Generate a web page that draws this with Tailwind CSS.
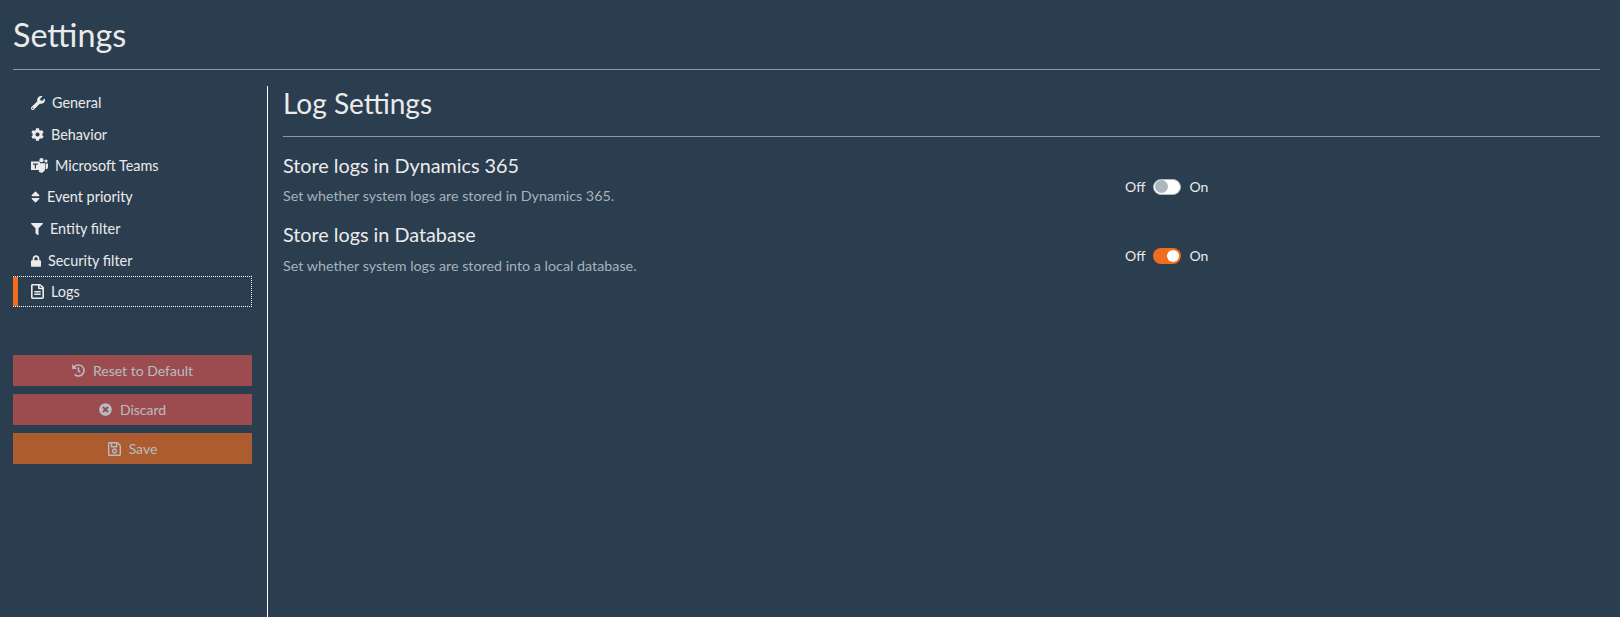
<!DOCTYPE html>
<html lang="en">
<head>
    <meta charset="UTF-8">
    <title>Settings</title>
    <script src="https://cdn.jsdelivr.net/npm/@tailwindcss/browser@4"></script>
</head>
<body class="bg-[#2b3e50] text-[#ebebeb] font-['Lato',sans-serif] h-[617px] overflow-hidden">
    <div class="pl-[13px] pr-[20px]">
        <h1 class="text-[32.3px] leading-[38px] pt-4 pb-[15px] border-b border-[#8f9aa5]">Settings</h1>
        <div class="flex mt-4 h-[531px]">
            <aside class="w-[255px] border-r border-white shrink-0 pr-[15px]">
                <nav class="text-[14.4px] flex flex-col h-[222px]">
                    <a class="h-[31.6px] pt-[2px] pl-[18px] flex items-center gap-[7px]">
                        <svg class="w-[14px] h-[14px] fill-current" viewBox="0 0 512 512"><path d="M507.73 109.1c-2.24-9.03-13.54-12.09-20.12-5.51l-74.36 74.36-67.88-11.31-11.31-67.88 74.36-74.36c6.62-6.62 3.43-17.9-5.66-20.16-47.38-11.74-99.55.91-136.58 37.93-39.64 39.64-50.55 97.1-34.05 147.2L18.74 402.76c-24.99 24.99-24.99 65.51 0 90.5 24.99 24.99 65.51 24.99 90.5 0l213.21-213.21c50.12 16.71 107.47 5.68 147.37-34.22 37.07-37.07 49.7-89.32 37.91-136.73zM64 472c-13.25 0-24-10.75-24-24 0-13.26 10.75-24 24-24s24 10.74 24 24c0 13.25-10.75 24-24 24z"/></svg>
                        General</a>
                    <a class="h-[31.6px] pt-[2px] pl-[18px] flex items-center gap-[7px]">
                        <svg class="w-[13px] h-[13px] fill-current" viewBox="0 0 512 512"><path d="M487.4 315.7l-42.6-24.6c4.3-23.2 4.3-47 0-70.2l42.6-24.6c4.9-2.8 7.1-8.6 5.5-14-11.1-35.6-30-67.8-54.7-94.6-3.8-4.1-10-5.1-14.8-2.3L380.8 110c-17.9-15.4-38.5-27.3-60.8-35.1V25.8c0-5.6-3.9-10.5-9.4-11.7-36.7-8.2-74.3-7.8-109.2 0-5.5 1.2-9.4 6.1-9.4 11.7V75c-22.2 7.9-42.8 19.8-60.8 35.1L88.7 85.5c-4.9-2.8-11-1.9-14.8 2.3-24.7 26.7-43.6 58.9-54.7 94.6-1.7 5.4.6 11.2 5.5 14L67.3 221c-4.3 23.2-4.3 47 0 70.2l-42.6 24.6c-4.9 2.8-7.1 8.6-5.5 14 11.1 35.6 30 67.8 54.7 94.6 3.8 4.1 10 5.1 14.8 2.3l42.6-24.6c17.9 15.4 38.5 27.3 60.8 35.1v49.2c0 5.6 3.9 10.5 9.4 11.7 36.7 8.2 74.3 7.8 109.2 0 5.5-1.2 9.4-6.1 9.4-11.7v-49.2c22.2-7.9 42.8-19.8 60.8-35.1l42.6 24.6c4.9 2.8 11 1.9 14.8-2.3 24.7-26.7 43.6-58.9 54.7-94.6 1.5-5.5-.7-11.3-5.6-14.1zM256 336c-44.1 0-80-35.9-80-80s35.9-80 80-80 80 35.9 80 80-35.9 80-80 80z"/></svg>
                        Behavior</a>
                    <a class="h-[31.6px] pt-[2px] pl-[18px] flex items-center gap-[7px]">
                        <svg class="w-[17px] h-[15px] fill-current" viewBox="0 0 17 15"><circle cx="10.5" cy="2.2" r="2.1"/><circle cx="15" cy="3" r="1.6"/><path d="M8 5.2h6v5.8a3.6 3.6 0 0 1-6.6 2H8zM14.6 5.4H17v3.6a2.2 2.2 0 0 1-2.4 2.2z"/><path fill-rule="evenodd" d="M0 3.6h8.8v8.4H0zM2 5.4v1.3h1.8v3.8h1.2V6.7h1.8V5.4z"/></svg>
                        Microsoft Teams</a>
                    <a class="h-[31.6px] pl-[18px] flex items-center gap-[7px]">
                        <svg class="w-[9px] h-[14px] fill-current" viewBox="0 0 320 512"><path d="M41 288h238c21.4 0 32.1 25.9 17 41L177 448c-9.4 9.4-24.6 9.4-33.9 0L24 329c-15.1-15.1-4.4-41 17-41zm255-105L177 64c-9.4-9.4-24.6-9.4-33.9 0L24 183c-15.1 15.1-4.4 41 17 41h238c21.4 0 32.1-25.9 17-41z"/></svg>
                        Event priority</a>
                    <a class="h-[31.6px] pt-[2px] pl-[18px] flex items-center gap-[7px]">
                        <svg class="w-[12px] h-[12px] fill-current" viewBox="0 0 512 512"><path d="M487.976 0H24.028C2.71 0-8.047 25.866 7.058 40.971L192 225.941V432c0 7.831 3.821 15.17 10.237 19.662l80 55.98C298.02 518.69 320 507.493 320 487.98V225.941l184.947-184.97C520.021 25.896 509.338 0 487.976 0z"/></svg>
                        Entity filter</a>
                    <a class="h-[31.6px] pt-[2px] pl-[18px] flex items-center gap-[7px]">
                        <svg class="w-[10px] h-[12px] fill-current" viewBox="0 0 448 512"><path d="M400 224h-24v-72C376 68.2 307.8 0 224 0S72 68.2 72 152v72H48c-26.5 0-48 21.5-48 48v192c0 26.5 21.5 48 48 48h352c26.5 0 48-21.5 48-48V272c0-26.5-21.5-48-48-48zm-104 0H152v-72c0-39.7 32.3-72 72-72s72 32.3 72 72v72z"/></svg>
                        Security filter</a>
                    <a class="h-[31.6px] pl-[18px] flex items-center gap-[7px] border border-l-0 border-dotted border-white shadow-[inset_5px_0_0_#f26c1e]">
                        <svg class="w-[13px] h-[15px] fill-current" preserveAspectRatio="none" viewBox="0 0 384 512"><path d="M288 248v28c0 6.6-5.4 12-12 12H108c-6.6 0-12-5.4-12-12v-28c0-6.6 5.4-12 12-12h168c6.6 0 12 5.4 12 12zm-12 72H108c-6.6 0-12 5.4-12 12v28c0 6.6 5.4 12 12 12h168c6.6 0 12-5.4 12-12v-28c0-6.6-5.4-12-12-12zm108-188.1V464c0 26.5-21.5 48-48 48H48c-26.5 0-48-21.5-48-48V48C0 21.5 21.5 0 48 0h204.1C264.8 0 277 5.1 286 14.1L369.9 98c9 8.9 14.1 21.2 14.1 33.9zm-128-80V128h76.1L256 51.9zM336 464V176H232c-13.3 0-24-10.7-24-24V48H48v416h288z"/></svg>
                        Logs</a>
                </nav>
                <div class="mt-[47px] flex flex-col gap-2 text-[14px] text-white">
                    <button class="h-[31px] bg-[#d9534f] opacity-65 flex items-center justify-center gap-2">
                        <svg class="w-[13px] h-[13px] fill-current" viewBox="0 0 512 512"><path d="M504 255.531c.253 136.64-111.18 248.372-247.82 248.468-59.015.042-113.223-20.53-155.822-54.911-11.077-8.94-11.905-25.541-1.839-35.607l11.267-11.267c8.609-8.609 22.353-9.551 31.891-1.984C173.062 425.135 212.781 440 256 440c101.705 0 184-82.311 184-184 0-101.705-82.311-184-184-184-48.814 0-93.149 18.969-126.068 49.932l50.754 50.754c10.08 10.08 2.941 27.314-11.313 27.314H24c-8.837 0-16-7.163-16-16V38.627c0-14.254 17.234-21.393 27.314-11.314l49.372 49.372C129.209 34.136 189.552 8 256 8c136.81 0 247.747 110.78 248 247.531zm-180.912 78.784l9.823-12.63c8.138-10.463 6.253-25.542-4.21-33.679L288 256.349V152c0-13.255-10.745-24-24-24h-16c-13.255 0-24 10.745-24 24v135.651l65.409 50.874c10.463 8.137 25.541 6.253 33.679-4.21z"/></svg>
                        Reset to Default</button>
                    <button class="h-[31px] bg-[#d9534f] opacity-65 flex items-center justify-center gap-2">
                        <svg class="w-[13px] h-[13px] fill-current" viewBox="0 0 512 512"><path d="M256 8C119 8 8 119 8 256s111 248 248 248 248-111 248-248S393 8 256 8zm121.6 313.1c4.7 4.7 4.7 12.3 0 17L338 377.6c-4.7 4.7-12.3 4.7-17 0L256 312l-65.1 65.6c-4.7 4.7-12.3 4.7-17 0L134.4 338c-4.7-4.7-4.7-12.3 0-17l65.6-65-65.6-65.1c-4.7-4.7-4.7-12.3 0-17l39.6-39.6c4.7-4.7 12.3-4.7 17 0l65 65.7 65.1-65.6c4.7-4.7 12.3-4.7 17 0l39.6 39.6c4.7 4.7 4.7 12.3 0 17L312 256l65.6 65.1z"/></svg>
                        Discard</button>
                    <button class="h-[31px] bg-[#f26c1e] opacity-65 flex items-center justify-center gap-2">
                        <svg class="w-[13px] h-[14px] fill-current" preserveAspectRatio="none" viewBox="0 32 448 448"><path d="M433.941 129.941l-83.882-83.882A48 48 0 0 0 316.118 32H48C21.49 32 0 53.49 0 80v352c0 26.51 21.49 48 48 48h352c26.51 0 48-21.49 48-48V163.882a48 48 0 0 0-14.059-33.941zM272 80v80H144V80h128zm122 352H54a6 6 0 0 1-6-6V86a6 6 0 0 1 6-6h42v104c0 13.255 10.745 24 24 24h176c13.255 0 24-10.745 24-24V83.882l78.243 78.243a6 6 0 0 1 1.757 4.243V426a6 6 0 0 1-6 6zM224 232c-48.523 0-88 39.477-88 88s39.477 88 88 88 88-39.477 88-88-39.477-88-88-88zm0 128c-22.056 0-40-17.944-40-40s17.944-40 40-40 40 17.944 40 40-17.944 40-40 40z"/></svg>
                        Save</button>
                </div>
            </aside>
            <main class="flex-1 pl-[15px]">
                <h2 class="text-[28px] leading-[34px] pb-[16px] border-b border-[#8f9aa5]">Log Settings</h2>
                <div class="flex h-[69px] mt-[16px]">
                    <div class="w-[842px]">
                        <h5 class="text-[19.8px] leading-6">Store logs in Dynamics 365</h5>
                        <p class="text-[14.3px] leading-[21px] mt-[8px] text-[#a8b2bd]">Set whether system logs are stored in Dynamics 365.</p>
                    </div>
                    <div class="flex items-center gap-2 text-[14px] h-[67px]">
                        Off
                        <span class="w-[28px] h-[16px] rounded-full bg-white border border-[#adb5bd] flex items-center px-[1px]"><span class="w-[13px] h-[13px] rounded-full bg-[#adb5bd]"></span></span>
                        On
                    </div>
                </div>
                <div class="flex h-[69px]">
                    <div class="w-[842px]">
                        <h5 class="text-[19.8px] leading-6">Store logs in Database</h5>
                        <p class="text-[14.3px] leading-[21px] mt-[9px] text-[#a8b2bd]">Set whether system logs are stored into a local database.</p>
                    </div>
                    <div class="flex items-center gap-2 text-[14px] h-[67px]">
                        Off
                        <span class="w-[28px] h-[16px] rounded-full bg-[#f26c1e] flex items-center justify-end px-[2px]"><span class="w-[12px] h-[12px] rounded-full bg-white"></span></span>
                        On
                    </div>
                </div>
            </main>
        </div>
    </div>
</body>
</html>
